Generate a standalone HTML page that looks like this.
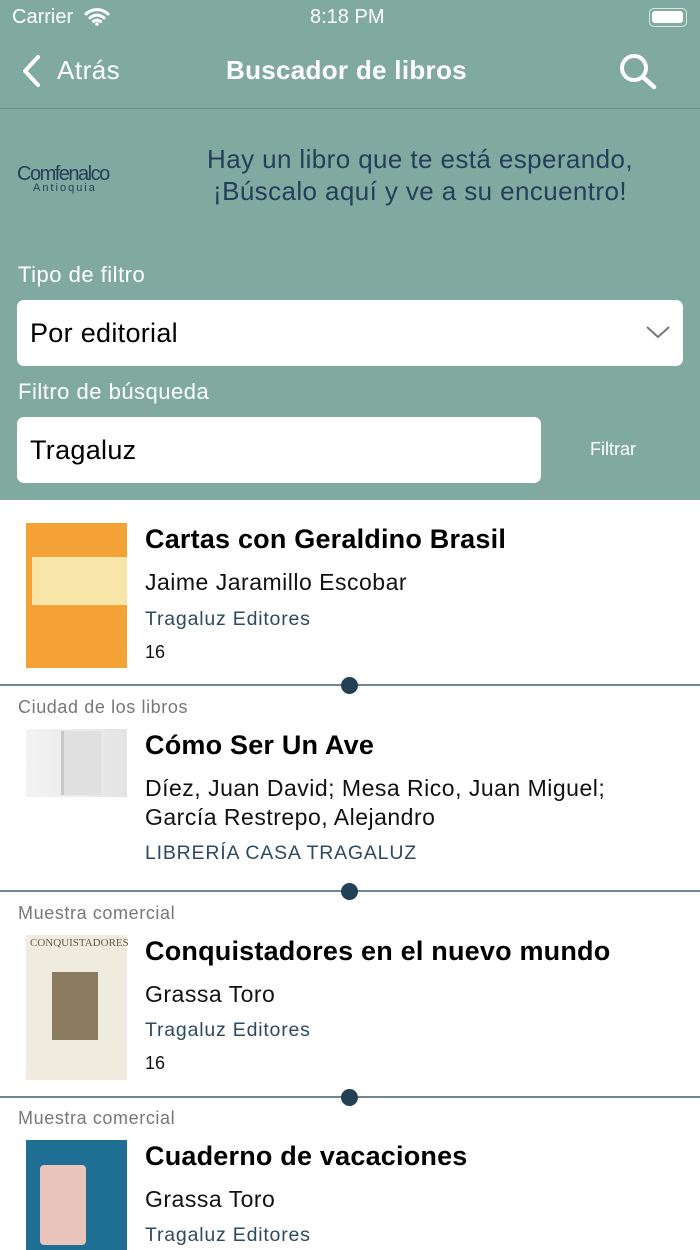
<html><head><style>
body{margin:0;width:700px;height:1244px;overflow:hidden;font-family:"Liberation Sans",sans-serif;background:#fff;position:relative}
.a{position:absolute;white-space:nowrap}
.hdr{position:absolute;left:0;top:0;width:700px;height:500px;background:#80aaa0}
.t{font-weight:bold;font-size:27px;color:#000;letter-spacing:.2px}
.au{font-size:23px;color:#111;letter-spacing:.5px}
.ed{font-size:19.5px;color:#2e4a5e;letter-spacing:.8px}
.n{font-size:18px;color:#111}
.lb{font-size:18px;color:#777;letter-spacing:.6px}
.sep{position:absolute;left:0;width:700px;height:1.5px;background:#6f8796}
.dot{position:absolute;left:341px;width:17px;height:17px;border-radius:50%;background:#234055}
</style></head><body>
<div class="hdr"></div>
<div class="a" style="left:12px;top:6px;font-size:20px;color:#fff">Carrier</div>
<svg class="a" style="left:84px;top:6px" width="26" height="20" viewBox="0 0 26 20"><path d="M2 8a16 16 0 0 1 22 0M6 12a10 10 0 0 1 14 0M9.5 15.5a5 5 0 0 1 7 0" stroke="#fff" stroke-width="3" fill="none" stroke-linecap="round"/><circle cx="13" cy="18" r="1.8" fill="#fff"/></svg>
<div class="a" style="left:310px;top:6px;font-size:20px;color:#fff">8:18 PM</div>
<div class="a" style="left:649px;top:8px;width:36px;height:17px;border:1.5px solid #d8e6e2;border-radius:5px"></div>
<div class="a" style="left:652px;top:11px;width:31px;height:12px;background:#fff;border-radius:3px"></div>
<svg class="a" style="left:18px;top:54px" width="26" height="34"><path d="M20 3L7 17l13 14" stroke="#fff" stroke-width="4" fill="none" stroke-linecap="round" stroke-linejoin="round"/></svg>
<div class="a" style="left:57px;top:55px;font-size:26px;color:#fff;letter-spacing:.5px">Atrás</div>
<div class="a" style="left:226px;top:55px;font-size:26px;color:#fff;font-weight:bold;letter-spacing:.3px">Buscador de libros</div>
<svg class="a" style="left:618px;top:52px" width="42" height="38"><circle cx="16" cy="16" r="12" stroke="#fff" stroke-width="4" fill="none"/><path d="M25 25l11 10" stroke="#fff" stroke-width="4.5" stroke-linecap="round"/></svg>
<div class="a" style="left:0;top:108px;width:700px;height:1px;background:#6a8f86"></div>
<div class="a" style="left:17px;top:163px;font-size:20px;color:#23405a;letter-spacing:-1.5px">Comfenalco</div>
<div class="a" style="left:33px;top:182px;font-size:11px;color:#23405a;letter-spacing:2px">Antioquia</div>
<div class="a" style="left:170px;top:143px;width:500px;text-align:center;font-size:26px;color:#23405a;line-height:32px;letter-spacing:.4px">Hay un libro que te está esperando,<br>¡Búscalo aquí y ve a su encuentro!</div>
<div class="a" style="left:18px;top:262px;font-size:22px;color:#fff;letter-spacing:.5px">Tipo de filtro</div>
<div class="a" style="left:17px;top:300px;width:666px;height:66px;background:#fff;border-radius:7px"></div>
<div class="a" style="left:30px;top:318px;font-size:27px;color:#000;letter-spacing:.3px">Por editorial</div>
<svg class="a" style="left:645px;top:324px" width="26" height="16"><path d="M2 3l11 10 11-10" stroke="#777" stroke-width="2" fill="none"/></svg>
<div class="a" style="left:18px;top:379px;font-size:22px;color:#fff;letter-spacing:.5px">Filtro de búsqueda</div>
<div class="a" style="left:17px;top:417px;width:524px;height:66px;background:#fff;border-radius:7px"></div>
<div class="a" style="left:30px;top:435px;font-size:27px;color:#000;letter-spacing:.3px">Tragaluz</div>
<div class="a" style="left:590px;top:439px;font-size:18px;color:#fff">Filtrar</div>

<div class="a" style="left:26px;top:523px;width:101px;height:145px;background:#f4a236"></div>
<div class="a" style="left:32px;top:557px;width:95px;height:48px;background:#f7e6a8"></div>
<div class="a t" style="left:145px;top:524px">Cartas con Geraldino Brasil</div>
<div class="a au" style="left:145px;top:569px">Jaime Jaramillo Escobar</div>
<div class="a ed" style="left:145px;top:608px">Tragaluz Editores</div>
<div class="a n" style="left:145px;top:642px">16</div>
<div class="sep" style="top:684px"></div><div class="dot" style="top:677px"></div>

<div class="a lb" style="left:18px;top:697px">Ciudad de los libros</div>
<div class="a" style="left:26px;top:729px;width:101px;height:68px;background:linear-gradient(90deg,#f3f3f3,#e4e4e4)"></div>
<div class="a" style="left:61px;top:731px;width:37px;height:64px;background:#e0e0e0;border-left:3px solid #c8c8c8"></div>
<div class="a t" style="left:145px;top:730px">Cómo Ser Un Ave</div>
<div class="a au" style="left:145px;top:774px;line-height:29px">Díez, Juan David; Mesa Rico, Juan Miguel;<br>García Restrepo, Alejandro</div>
<div class="a ed" style="left:145px;top:842px">LIBRERÍA CASA TRAGALUZ</div>
<div class="sep" style="top:890px"></div><div class="dot" style="top:883px"></div>

<div class="a lb" style="left:18px;top:903px">Muestra comercial</div>
<div class="a" style="left:26px;top:935px;width:101px;height:145px;background:#f0ebdf"></div>
<div class="a" style="left:52px;top:972px;width:46px;height:68px;background:#8a7a60"></div>
<div class="a" style="left:30px;top:937px;font-size:11px;color:#6a5a4a;font-family:'Liberation Serif',serif">CONQUISTADORES</div>
<div class="a t" style="left:145px;top:936px">Conquistadores en el nuevo mundo</div>
<div class="a au" style="left:145px;top:981px">Grassa Toro</div>
<div class="a ed" style="left:145px;top:1019px">Tragaluz Editores</div>
<div class="a n" style="left:145px;top:1053px">16</div>
<div class="sep" style="top:1096px"></div><div class="dot" style="top:1089px"></div>

<div class="a lb" style="left:18px;top:1108px">Muestra comercial</div>
<div class="a" style="left:26px;top:1140px;width:101px;height:110px;background:#1f6f95"></div>
<div class="a" style="left:40px;top:1165px;width:46px;height:80px;background:#e8c4bb;border-radius:4px"></div>
<div class="a t" style="left:145px;top:1141px">Cuaderno de vacaciones</div>
<div class="a au" style="left:145px;top:1186px">Grassa Toro</div>
<div class="a ed" style="left:145px;top:1224px">Tragaluz Editores</div>
</body></html>
